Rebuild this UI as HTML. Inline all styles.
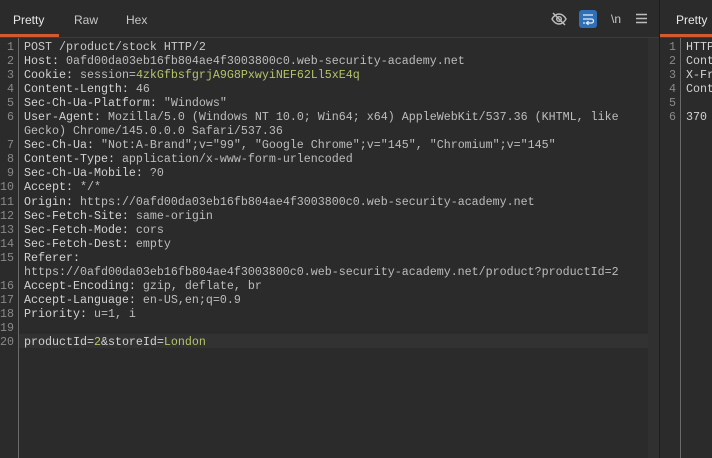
<!DOCTYPE html>
<html><head><style>
body{margin:0;width:712px;height:458px;background:#2b2b2b;overflow:hidden;position:relative;font-family:"Liberation Sans",sans-serif}
.hdr{position:absolute;top:0;height:37px;background:#2b2b2b;border-bottom:1px solid #3c3c3c}
.tab{position:absolute;top:13px;font-size:12px;color:#c8c8c8}
.ul{position:absolute;top:34px;height:3px;background:#d35a30}
.code{position:absolute;top:40px;font-family:"Liberation Mono",monospace;font-size:11.67px;line-height:14.05px;white-space:pre;color:#d2d2d2}
.g{position:absolute;top:38px;bottom:0;border-right:1px solid #6a6a6a}
.n{color:#8a8a8a;text-align:right}
.v{color:#bdbdbd}
.c{color:#b5c36a}
.ln{color:#c8c8c8}
#rp{position:absolute;left:660px;top:0;width:52px;height:458px;overflow:hidden}
</style></head><body>
<div class="hdr" style="left:0;width:659px"></div>
<div class="tab" style="left:13px;color:#e8e8e8">Pretty</div>
<div class="tab" style="left:74px">Raw</div>
<div class="tab" style="left:126px">Hex</div>
<div class="ul" style="left:0;width:59px"></div>
<svg style="position:absolute;left:550px;top:11px" width="18" height="16" viewBox="0 0 18 16"><path d="M2 8c2-3.5 4.5-5 7-5s5 1.5 7 5c-2 3.5-4.5 5-7 5s-5-1.5-7-5z" fill="none" stroke="#bdbdbd" stroke-width="1.4"/><circle cx="9" cy="8" r="2.3" fill="none" stroke="#bdbdbd" stroke-width="1.4"/><path d="M3 2l12 12" stroke="#bdbdbd" stroke-width="1.4"/></svg>
<div style="position:absolute;left:579px;top:10px;width:18px;height:18px;background:#2f6fb5;border-radius:3px"></div>
<svg style="position:absolute;left:581px;top:12px" width="14" height="14" viewBox="0 0 14 14"><path d="M2 3h10M2 7h8.5a2 2 0 0 1 0 4H6M7.5 9.3L5.5 11l2 1.7M2 11h2" fill="none" stroke="#e8eef8" stroke-width="1.3"/></svg>
<div style="position:absolute;left:611px;top:12px;font-size:12px;color:#c8c8c8">\n</div>
<svg style="position:absolute;left:636px;top:13px" width="11" height="11" viewBox="0 0 11 11"><path d="M0 1.5h11M0 5.5h11M0 9.5h11" stroke="#bdbdbd" stroke-width="1.4"/></svg>

<div style="position:absolute;left:648px;top:38px;width:11px;bottom:0;background:#303030"></div>
<div style="position:absolute;left:659px;top:0;width:1px;bottom:0;background:#1c1c1c"></div>
<div style="position:absolute;left:19px;top:334px;width:629px;height:14px;background:#323232"></div>
<div class="g" style="left:0;width:18px"></div>

<div class="code n" style="left:0;width:14px">1
2
3
4
5
6

7
8
9
10
11
12
13
14
15

16
17
18
19
20</div>
<div class="code" style="left:24px"><span class="ln">POST /product/stock HTTP/2</span>
Host: <span class="v">0afd00da03eb16fb804ae4f3003800c0.web-security-academy.net</span>
Cookie: <span class="v">session=</span><span class="c">4zkGfbsfgrjA9G8PxwyiNEF62Ll5xE4q</span>
Content-Length: <span class="v">46</span>
Sec-Ch-Ua-Platform: <span class="v">"Windows"</span>
User-Agent: <span class="v">Mozilla/5.0 (Windows NT 10.0; Win64; x64) AppleWebKit/537.36 (KHTML, like</span>
<span class="v">Gecko) Chrome/145.0.0.0 Safari/537.36</span>
Sec-Ch-Ua: <span class="v">"Not:A-Brand";v="99", "Google Chrome";v="145", "Chromium";v="145"</span>
Content-Type: <span class="v">application/x-www-form-urlencoded</span>
Sec-Ch-Ua-Mobile: <span class="v">?0</span>
Accept: <span class="v">*/*</span>
Origin: <span class="v">https://0afd00da03eb16fb804ae4f3003800c0.web-security-academy.net</span>
Sec-Fetch-Site: <span class="v">same-origin</span>
Sec-Fetch-Mode: <span class="v">cors</span>
Sec-Fetch-Dest: <span class="v">empty</span>
Referer:
<span class="v">https://0afd00da03eb16fb804ae4f3003800c0.web-security-academy.net/product?productId=2</span>
Accept-Encoding: <span class="v">gzip, deflate, br</span>
Accept-Language: <span class="v">en-US,en;q=0.9</span>
Priority: <span class="v">u=1, i</span>

productId=<span class="c">2</span>&amp;storeId=<span class="c">London</span></div>

<div id="rp">
<div class="hdr" style="left:0;width:52px"></div>
<div class="tab" style="left:16px;color:#e8e8e8">Pretty</div>
<div class="ul" style="left:0;width:52px"></div>
<div class="g" style="left:0;width:20px"></div>
<div class="code n" style="left:0;width:16px">1
2
3
4
5
6</div>
<div class="code" style="left:26px">HTTP
Cont
X-Fr
Cont

370</div>
</div>
</body></html>
